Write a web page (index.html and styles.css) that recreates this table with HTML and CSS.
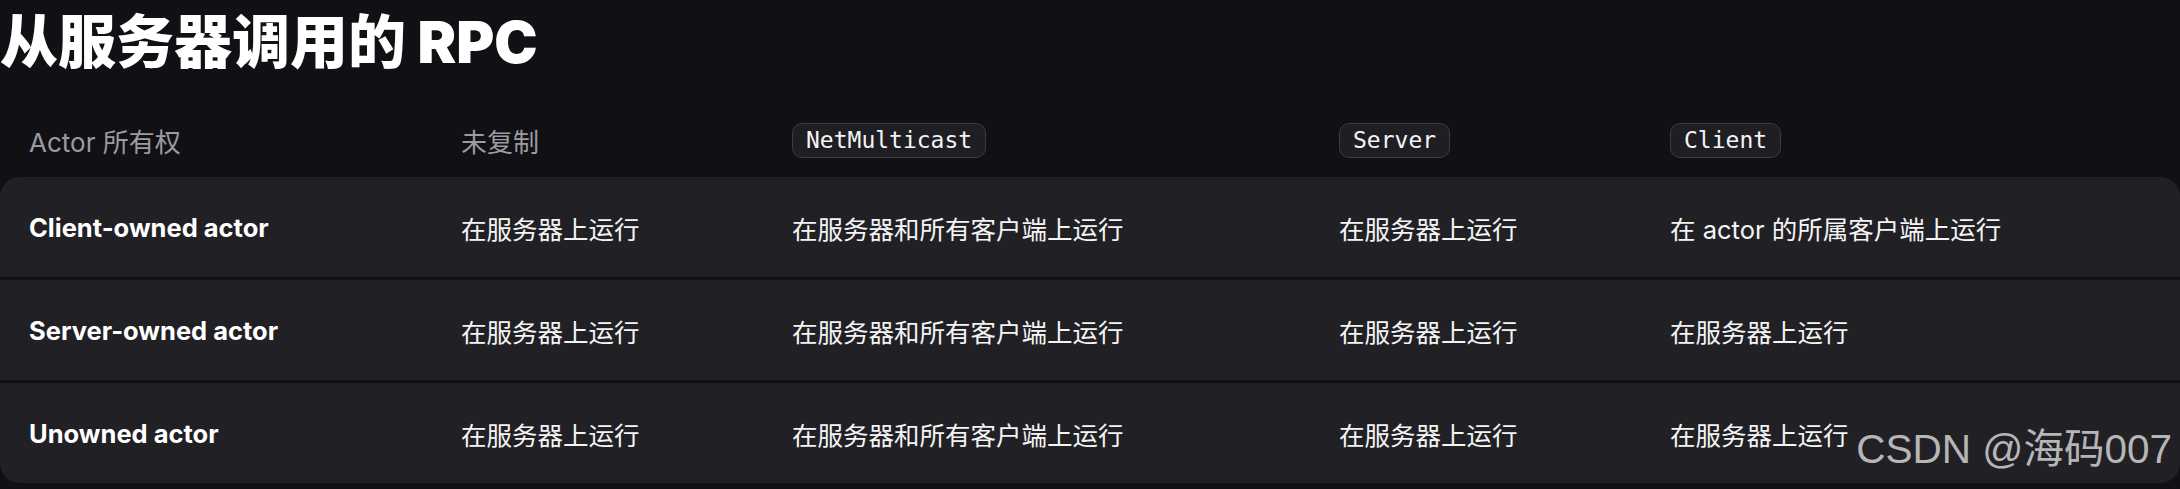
FILE: index.html
```html
<!DOCTYPE html>
<html lang="zh-CN">
<head>
    <meta charset="UTF-8">
    <meta name="viewport" content="width=device-width, initial-scale=1.0">
    <title>从服务器调用的 RPC</title>
    <link rel="stylesheet" href="styles.css">
</head>
<body>
    <div class="page">
        <h1 class="title">从服务器调用的 RPC</h1>

        <div class="rpc-table">
            <div class="head-row">
                <div class="cell">Actor 所有权</div>
                <div class="cell">未复制</div>
                <div class="cell"><code class="tag">NetMulticast</code></div>
                <div class="cell"><code class="tag">Server</code></div>
                <div class="cell"><code class="tag">Client</code></div>
            </div>

            <div class="body-rows">
                <div class="row">
                    <div class="cell owner">Client-owned actor</div>
                    <div class="cell">在服务器上运行</div>
                    <div class="cell">在服务器和所有客户端上运行</div>
                    <div class="cell">在服务器上运行</div>
                    <div class="cell">在 actor 的所属客户端上运行</div>
                </div>
                <div class="row">
                    <div class="cell owner">Server-owned actor</div>
                    <div class="cell">在服务器上运行</div>
                    <div class="cell">在服务器和所有客户端上运行</div>
                    <div class="cell">在服务器上运行</div>
                    <div class="cell">在服务器上运行</div>
                </div>
                <div class="row">
                    <div class="cell owner">Unowned actor</div>
                    <div class="cell">在服务器上运行</div>
                    <div class="cell">在服务器和所有客户端上运行</div>
                    <div class="cell">在服务器上运行</div>
                    <div class="cell">在服务器上运行</div>
                </div>
            </div>
        </div>

        <!-- blog watermark over the last row -->
        <div class="watermark">CSDN @海码007</div>
    </div>
</body>
</html>
```

FILE: styles.css
```css
body {
    margin: 0;
    background-color: #111115;
    color: #f4f4f5;
    font-family: 'Inter', 'Noto Sans CJK SC', sans-serif;
}
.page {
    position: relative;
    width: 2180px;
    height: 489px;
    overflow: hidden;
}
.title {
    margin: 0;
    height: 104px;
    font-size: 58px;
    font-weight: 900;
    line-height: 84px;
    color: #fff;
}

/* table laid out as a grid so header and rows share columns */
.head-row, .row {
    display: grid;
    grid-template-columns: 432px 331px 547px 331px 1fr;
    align-items: center;
    padding-left: 29px;
}
.head-row {
    height: 73px;
    color: #9b9ba1;
    font-size: 26px;
}
.tag {
    display: inline-block;
    font-family: 'DejaVu Sans Mono', monospace;
    font-size: 23px;
    line-height: 27px;
    padding: 3px 13px;
    color: #f4f4f5;
    background-color: #1f1f23;
    border: 1px solid #3b3b40;
    border-radius: 10px;
}
.body-rows {
    display: flex;
    flex-direction: column;
    gap: 3px;
    border-radius: 20px;
    overflow: hidden;
}
.row {
    height: 100px;
    background-color: #212125;
    font-size: 25.5px;
}
.owner {
    font-size: 25.5px;
    font-weight: 700;
    color: #fff;
}
.watermark {
    position: absolute;
    right: 8px;
    bottom: 14px;
    font-family: 'Liberation Sans', 'Noto Sans CJK SC', sans-serif;
    font-size: 40.5px;
    color: #b6b6b6;
}
```
